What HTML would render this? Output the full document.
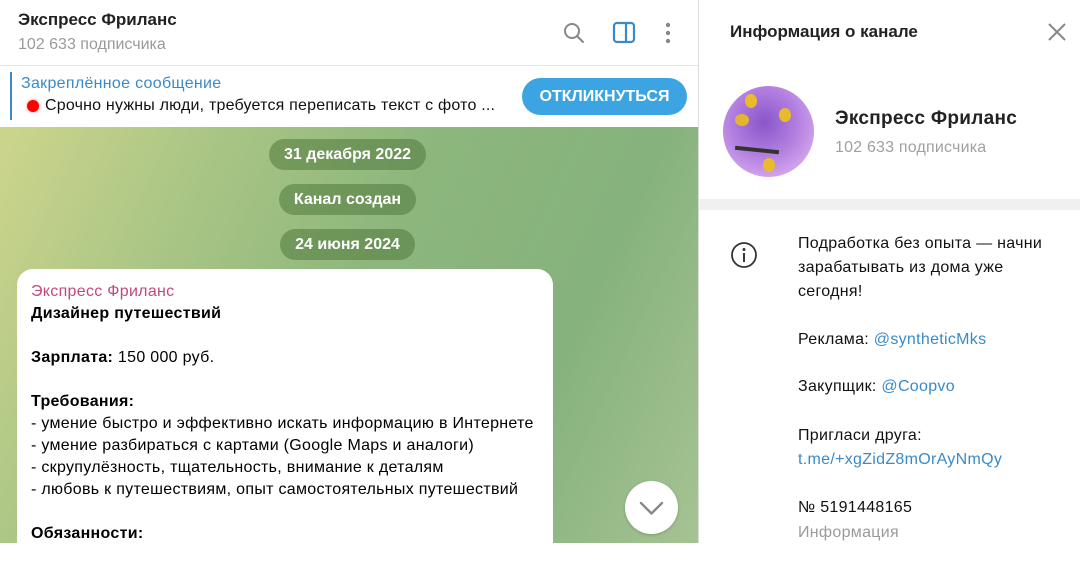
<!DOCTYPE html>
<html><head><meta charset="utf-8"><style>
*{margin:0;padding:0;box-sizing:border-box}
body{width:1080px;height:543px;overflow:hidden;font-family:"Liberation Sans","DejaVu Sans",sans-serif;background:#fff;position:relative;color:#000}
.abs{position:absolute}
#hdr{left:0;top:0;width:698px;height:66px;background:#fff;border-bottom:1px solid #e6e6e6}
#pin{left:0;top:67px;width:698px;height:60px;background:#fff}
#chat{left:0;top:127px;width:698px;height:416px;background:linear-gradient(115deg,#cdd58c 0%,#a9c585 25%,#8cb67c 50%,#86b27d 75%,#a6c393 100%)}
.pill{position:absolute;background:rgba(80,120,60,.55);color:#fff;font-size:16px;font-weight:bold;height:31px;line-height:31px;border-radius:16px;text-align:center}
#bubble{left:17px;top:269px;width:536px;height:300px;background:#fff;border-radius:16px;font-size:16px;line-height:22px;padding:12px 14px;letter-spacing:.3px}
#right{left:698px;top:0;width:382px;height:543px;background:#fff;border-left:1px solid #dcdcdc}
a{color:#3a8ac9;text-decoration:none}
</style></head><body>
<div id="hdr" class="abs">
 <div class="abs" style="left:18px;top:10px;font-size:17px;font-weight:bold;color:#222">Экспресс Фриланс</div>
 <div class="abs" style="left:18px;top:36px;font-size:16px;color:#9a9a9a">102 633 подписчика</div>
 <svg class="abs" style="left:562px;top:21px" width="24" height="24" viewBox="0 0 24 24"><circle cx="10" cy="10" r="7" fill="none" stroke="#888" stroke-width="2"/><path d="M15 15l6 6" stroke="#888" stroke-width="2" stroke-linecap="round"/></svg>
 <svg class="abs" style="left:612px;top:21px" width="26" height="24" viewBox="0 0 26 24"><rect x="2" y="2" width="20" height="19" rx="3" fill="none" stroke="#3a8ac9" stroke-width="2.2"/><path d="M14 2v19" stroke="#3a8ac9" stroke-width="2.2"/></svg>
 <svg class="abs" style="left:662px;top:21px" width="12" height="24" viewBox="0 0 12 24"><circle cx="6" cy="4" r="2.2" fill="#888"/><circle cx="6" cy="12" r="2.2" fill="#888"/><circle cx="6" cy="20" r="2.2" fill="#888"/></svg>
</div>
<div id="pin" class="abs">
 <div class="abs" style="left:10px;top:5px;width:2px;height:48px;background:#3a8ac9"></div>
 <div class="abs" style="left:21px;top:8px;font-size:16px;color:#3a8ac9;letter-spacing:.3px">Закреплённое сообщение</div>
 <div class="abs" style="left:27px;top:33px;width:12px;height:12px;border-radius:50%;background:#f00;box-shadow:0 0 3px #f88"></div>
 <div class="abs" style="left:45px;top:30px;font-size:16px;color:#111;letter-spacing:.2px">Срочно нужны люди, требуется переписать текст с фото ...</div>
 <div class="abs" style="left:522px;top:11px;width:165px;height:37px;border-radius:19px;background:#3da4e3;color:#fff;font-size:16px;font-weight:bold;text-align:center;line-height:37px">ОТКЛИКНУТЬСЯ</div>
</div>
<div id="chat" class="abs">
 <div class="pill" style="left:269px;top:12px;width:157px">31 декабря 2022</div>
 <div class="pill" style="left:279px;top:57px;width:137px">Канал создан</div>
 <div class="pill" style="left:280px;top:102px;width:135px">24 июня 2024</div>
</div>
<div id="bubble" class="abs">
 <div style="color:#c0497c">Экспресс Фриланс</div>
 <div><b>Дизайнер путешествий</b></div>
 <div>&nbsp;</div>
 <div><b>Зарплата:</b> 150 000 руб.</div>
 <div>&nbsp;</div>
 <div><b>Требования:</b></div>
 <div>- умение быстро и эффективно искать информацию в Интернете</div>
 <div>- умение разбираться с картами (Google Maps и аналоги)</div>
 <div>- скрупулёзность, тщательность, внимание к деталям</div>
 <div>- любовь к путешествиям, опыт самостоятельных путешествий</div>
 <div>&nbsp;</div>
 <div><b>Обязанности:</b></div>
</div>
<div class="abs" style="left:625px;top:481px;width:53px;height:53px;border-radius:50%;background:#fff;box-shadow:0 1px 3px rgba(0,0,0,.2)">
 <svg width="53" height="53" viewBox="0 0 53 53"><path d="M16 22l10.5 10.5L37 22" fill="none" stroke="#888" stroke-width="2.4" stroke-linecap="round" stroke-linejoin="round"/></svg>
</div>
<div id="right" class="abs">
 <div class="abs" style="left:31px;top:22px;font-size:17px;font-weight:bold;color:#222">Информация о канале</div>
 <svg class="abs" style="left:348px;top:22px" width="20" height="20" viewBox="0 0 20 20"><path d="M2 2l16 16M18 2L2 18" stroke="#888" stroke-width="2"/></svg>
 <div class="abs" style="left:24px;top:86px;width:91px;height:91px;border-radius:50%;background:radial-gradient(circle at 45% 40%,#8a55c9 0%,#b27fe0 45%,#d7a9ee 80%);overflow:hidden">
  <div class="abs" style="left:12px;top:28px;width:14px;height:12px;border-radius:50%;background:#e2b531"></div>
  <div class="abs" style="left:22px;top:8px;width:12px;height:14px;border-radius:50%;background:#e8bb2c"></div>
  <div class="abs" style="left:56px;top:22px;width:12px;height:14px;border-radius:50%;background:#e8bb2c"></div>
  <div class="abs" style="left:40px;top:72px;width:12px;height:14px;border-radius:50%;background:#e8bb2c"></div>
  <div class="abs" style="left:12px;top:62px;width:44px;height:4px;background:#333;transform:rotate(6deg)"></div>
 </div>
 <div class="abs" style="left:136px;top:108px;font-size:19px;font-weight:bold;color:#222;letter-spacing:.3px">Экспресс Фриланс</div>
 <div class="abs" style="left:136px;top:139px;font-size:16px;color:#a0a0a0;letter-spacing:.2px">102 633 подписчика</div>
 <div class="abs" style="left:0;top:199px;width:382px;height:11px;background:#f0f0f0"></div>
 <svg class="abs" style="left:31px;top:241px" width="28" height="28" viewBox="0 0 28 28"><circle cx="14" cy="14" r="12" fill="none" stroke="#333" stroke-width="1.8"/><circle cx="14" cy="8.5" r="1.5" fill="#333"/><path d="M14 12v9" stroke="#333" stroke-width="2"/></svg>
 <div class="abs" style="left:99px;top:232px;font-size:16px;line-height:24px;color:#111;width:245px;letter-spacing:.3px">
  <div>Подработка без опыта — начни зарабатывать из дома уже сегодня!</div>
  <div style="height:24px"></div>
  <div>Реклама: <a>@syntheticMks</a></div>
  <div style="height:23px"></div>
  <div>Закупщик: <a>@Coopvo</a></div>
  <div style="height:25px"></div>
  <div>Пригласи друга:</div>
  <div><a>t.me/+xgZidZ8mOrAyNmQy</a></div>
  <div style="height:24px"></div>
  <div>№ 5191448165</div>
  <div style="color:#9a9a9a;margin-top:1px">Информация</div>
 </div>
</div>
</body></html>
